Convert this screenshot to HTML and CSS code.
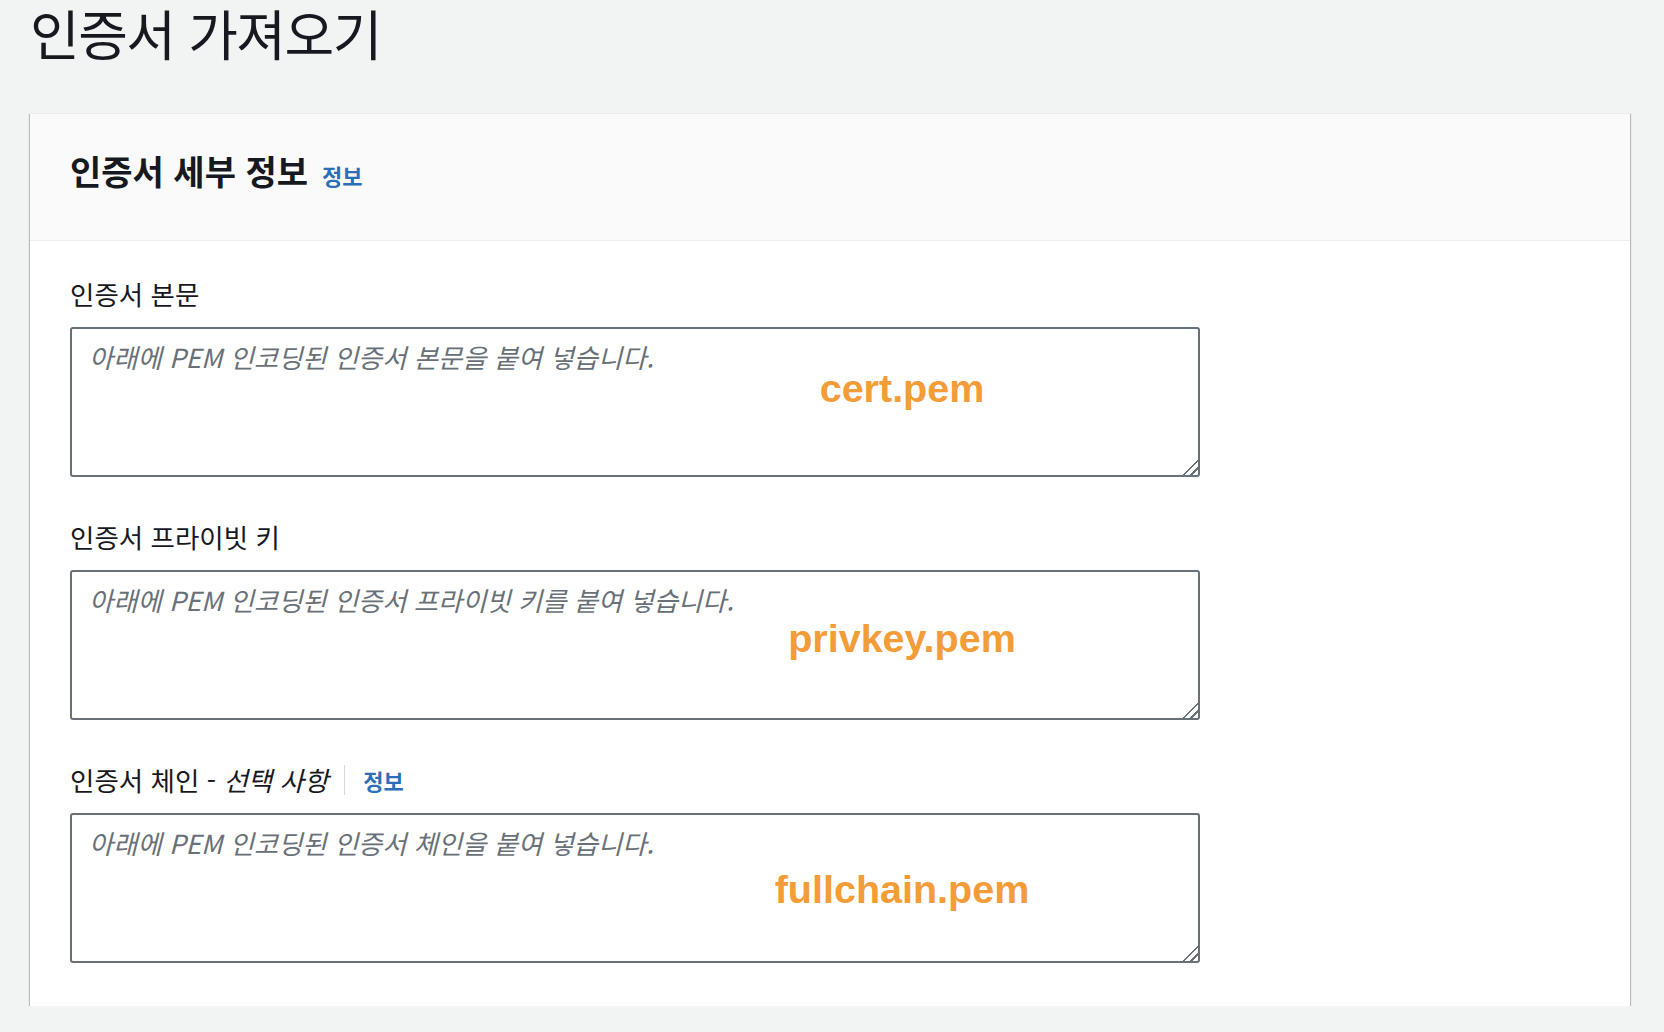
FILE: index.html
```html
<!DOCTYPE html>
<html lang="ko">
<head>
<meta charset="utf-8">
<title>인증서 가져오기</title>
<link rel="stylesheet" href="styles.css">
</head>
<body>
<main class="page">
  <h1 class="page-title">인증서 가져오기</h1>
  <section class="card">
    <header class="card-header">
      <h2 class="card-title">인증서 세부 정보</h2>
      <a class="info-link" href="#">정보</a>
    </header>
    <div class="card-body">
      <div class="field">
        <label class="field-label" for="cert-body">인증서 본문</label>
        <div class="input-wrap">
          <textarea id="cert-body" class="field-input" placeholder="아래에 PEM 인코딩된 인증서 본문을 붙여 넣습니다."></textarea>
          <span class="note note-cert">cert.pem</span>
        </div>
      </div>
      <div class="field">
        <label class="field-label" for="cert-key">인증서 프라이빗 키</label>
        <div class="input-wrap">
          <textarea id="cert-key" class="field-input" placeholder="아래에 PEM 인코딩된 인증서 프라이빗 키를 붙여 넣습니다."></textarea>
          <span class="note note-key">privkey.pem</span>
        </div>
      </div>
      <div class="field">
        <div class="field-label label-row">
          <label for="cert-chain">인증서 체인 - <i class="optional">선택 사항</i></label>
          <span class="divider"></span>
          <a class="info-link" href="#">정보</a>
        </div>
        <div class="input-wrap">
          <textarea id="cert-chain" class="field-input" placeholder="아래에 PEM 인코딩된 인증서 체인을 붙여 넣습니다."></textarea>
          <span class="note note-chain">fullchain.pem</span>
        </div>
      </div>
    </div>
  </section>
</main>
</body>
</html>
```

FILE: styles.css
```css
html, body {
  margin: 0;
  padding: 0;
}

body {
  background: #f2f3f3;
  color: #16191f;
  font-family: "Noto Sans CJK KR", "Noto Sans", sans-serif;
}

.page {
  padding: 0 34px 0 30px;
}

.page-title {
  margin: 0;
  font-size: 54px;
  font-weight: 400;
  line-height: 66px;
  letter-spacing: -1.5px;
}

.card {
  margin-top: 47px;
  background: #fff;
  border-top: 1px solid #eaeded;
  box-shadow: 0 1px 1px 0 rgba(0, 28, 36, 0.35), 1px 1px 1px 0 rgba(0, 28, 36, 0.2), -1px 1px 1px 0 rgba(0, 28, 36, 0.2);
}

.card-header {
  display: flex;
  align-items: baseline;
  gap: 14px;
  height: 127px;
  box-sizing: border-box;
  padding: 35px 40px 0;
  background: #fafafa;
  border-bottom: 1px solid #eaeded;
}

.card-title {
  margin: 0;
  font-size: 34px;
  font-weight: 700;
  line-height: 44px;
}

.info-link {
  color: #2a6fb8;
  font-size: 22px;
  font-weight: 700;
  text-decoration: none;
  letter-spacing: 0;
}

.card-body {
  display: flex;
  flex-direction: column;
  gap: 44px;
  padding: 37px 40px 43px;
}

.field {
  display: flex;
  flex-direction: column;
  gap: 17px;
}

.field-label {
  display: block;
  font-size: 26.5px;
  line-height: 32px;
  color: #16191f;
}

.label-row {
  display: flex;
  align-items: center;
  height: 32px;
}

.optional {
  font-style: italic;
}

.divider {
  width: 1px;
  height: 30px;
  background: #d5dbdb;
  margin: 0 18px 0 16px;
}

.input-wrap {
  position: relative;
  width: 1130px;
}

.field-input {
  display: block;
  width: 1130px;
  height: 150px;
  box-sizing: border-box;
  margin: 0;
  padding: 12px 17px 10px;
  border: 2px solid #687078;
  border-radius: 3px;
  background: #fff;
  font-family: "Noto Sans CJK KR", "Noto Sans", sans-serif;
  font-size: 26.3px;
  line-height: 32px;
  color: #16191f;
  resize: vertical;
  outline: none;
}

.field-input::placeholder {
  color: #687078;
  font-style: italic;
}

.field-input::-webkit-resizer {
  background: linear-gradient(135deg, transparent 48%, #687078 48% 56%, transparent 56% 72%, #687078 72% 80%, transparent 80%);
}

.note {
  position: absolute;
  left: 832px;
  font-family: "Liberation Sans", Arial, sans-serif;
  font-weight: 700;
  font-size: 39.5px;
  line-height: 40px;
  color: #f39c38;
  white-space: nowrap;
  transform: translateX(-50%);
  pointer-events: none;
}

.note-cert { top: 41px; }
.note-key { top: 48px; }
.note-chain { top: 56px; }
```
